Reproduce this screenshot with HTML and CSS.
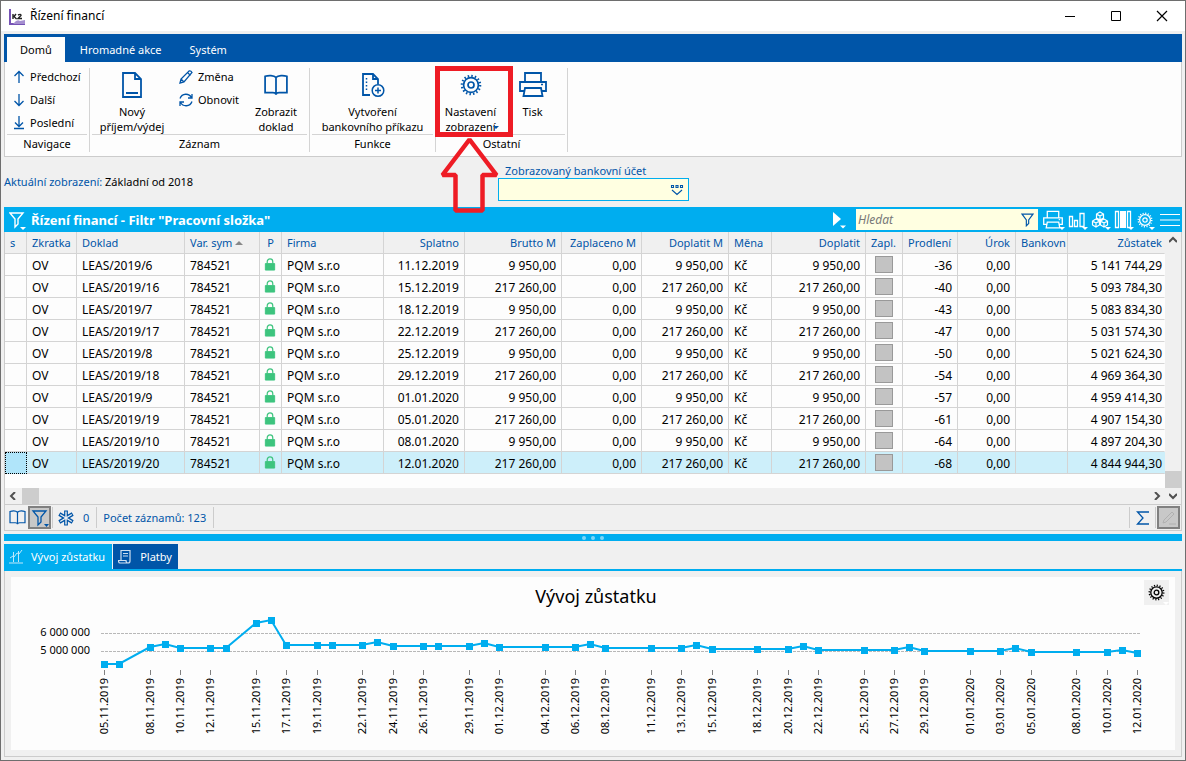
FILE: index.html
```html
<!DOCTYPE html>
<html lang="cs">
<head>
<meta charset="utf-8">
<title>Řízení financí</title>
<link rel="stylesheet" href="styles.css">
</head>
<body>
<svg class="defs" width="0" height="0" aria-hidden="true">
  <defs>
    <symbol id="gear" viewBox="0 0 22 22">
      <circle cx="11" cy="11" r="9.200" fill="none" stroke="currentColor" stroke-width="2.200" stroke-dasharray="1.500 2.113"/>
      <circle cx="11" cy="11" r="7.400" fill="none" stroke="currentColor" stroke-width="1.700"/>
      <circle cx="11" cy="11" r="3" fill="none" stroke="currentColor" stroke-width="1.700"/>
    </symbol>
    <symbol id="book" viewBox="0 0 22 20">
      <path d="M11 3v15M11 3C9 1 4 1 1 2v15h7c2 0 3 1 3 2 0-1 1-2 3-2h7V2c-3-1-8-1-10 1z" fill="none" stroke="currentColor" stroke-width="1.6"/>
    </symbol>
    <symbol id="funnel" viewBox="0 0 16 18">
      <path d="M1 1.500h14L9.500 9v4.500l-3 3V9z" fill="none" stroke="currentColor" stroke-width="1.5"/>
    </symbol>
    <symbol id="printer" viewBox="0 0 28 26">
      <path d="M6 9V1h16v8M6 19H1V10h26v9h-5M6 16h16l1.500 8h-19z" fill="none" stroke="currentColor" stroke-width="1.800"/>
      <path d="M22 12.500h2" stroke="currentColor" stroke-width="1.5"/>
    </symbol>
    <symbol id="lock" viewBox="0 0 12 14">
      <path d="M3 6V4a3 3 0 0 1 6 0v2" fill="none" stroke="#3dc47e" stroke-width="1.3"/>
      <path d="M1 6h10v7H1z" fill="#3dc47e" stroke="#3dc47e"/>
    </symbol>
  </defs>
</svg>
<div class="window">
  <header class="titlebar">
    <svg class="app-icon" width="17" height="17" viewBox="0 0 17 17"><path d="M1 1v15h15" fill="none" stroke="#7653b5" stroke-width="2"/><path d="M5 15q3-4 6-2l5-1v4H4z" fill="#a58fd0"/><path d="M4 6v5M7 6L5 8.500 7.500 11M9 7q3-1.500 3 .5L9 10.500h4" fill="none" stroke="#222" stroke-width="1.4"/></svg>
    <h1>Řízení financí</h1>
    <div class="window-buttons">
      <button aria-label="Minimalizovat"><svg width="12" height="12" viewBox="0 0 12 12"><path d="M1 6.500h10" stroke="#000"/></svg></button>
      <button aria-label="Maximalizovat"><svg width="12" height="12" viewBox="0 0 12 12"><path d="M1.500 1.500h9v9h-9z" fill="none" stroke="#000"/></svg></button>
      <button aria-label="Zavřít"><svg width="12" height="12" viewBox="0 0 12 12"><path d="M1 1l10 10M11 1L1 11" stroke="#000" stroke-width="1.2"/></svg></button>
    </div>
  </header>

  <main class="content">
    <section class="ribbon">
      <nav class="ribbon-tabs">
        <button class="active">Domů</button><button>Hromadné akce</button><button>Systém</button>
      </nav>
      <div class="ribbon-body">
        <div class="group group-nav">
          <div class="tools">
            <div class="small-tools">
              <button><svg width="12" height="14" viewBox="0 0 12 14"><path d="M6 13V2M1.500 6L6 1.500 10.500 6"/></svg>Předchozí</button>
              <button><svg width="12" height="14" viewBox="0 0 12 14"><path d="M6 1v11M1.500 8L6 12.500 10.500 8"/></svg>Další</button>
              <button><svg width="12" height="14" viewBox="0 0 12 14"><path d="M6 0v10M2 6.500L6 10.500l4-4M1 12.500h10"/></svg>Poslední</button>
            </div>
          </div>
          <h2>Navigace</h2>
        </div>
        <div class="group group-record">
          <div class="tools">
            <button class="big wide"><span class="icon"><svg width="22" height="28" viewBox="0 0 22 28"><path d="M2 2h12l6 6v18H2zM14 2v6h6M5 22h12" stroke-width="1.800"/></svg></span>Nový<br>příjem/výdej</button>
            <div class="small-tools">
              <button><svg width="14" height="14" viewBox="0 0 14 14"><path d="M1 13l1-4 8-8q2-.5 3 1.500L5 12zM8.500 2.500l3 3M2 9l3 3"/></svg>Změna</button>
              <button><svg width="14" height="14" viewBox="0 0 14 14"><path d="M1 5.500C3 0 10 0 12.500 4.500M13 1v4H9M13 8.500C11 14 4 14 1.500 9.500M1 13V9h4"/></svg>Obnovit</button>
            </div>
            <button class="big"><span class="icon"><svg width="24" height="22"><use href="#book"/></svg></span>Zobrazit<br>doklad</button>
          </div>
          <h2>Záznam</h2>
        </div>
        <div class="group group-function">
          <div class="tools">
            <button class="big"><span class="icon"><svg width="24" height="26" viewBox="0 0 24 26"><path d="M9 23H2V2h10l5 5v5M12 2v5h5" stroke-width="1.8"/><path d="M5.500 6v13" stroke-width="1.5" stroke-dasharray="1.500 2"/><circle cx="17" cy="18.500" r="5.800" stroke-width="1.500"/><path d="M17 15.500v6M14 18.500h6" stroke-width="1.500"/></svg></span>Vytvoření<br>bankovního příkazu</button>
          </div>
          <h2>Funkce</h2>
        </div>
        <div class="group group-other">
          <div class="tools">
            <button class="big"><span class="icon"><svg width="22" height="22"><use href="#gear"/></svg></span>Nastavení<br>zobrazení<svg class="callout" width="78" height="150" viewBox="0 0 78 150"><path d="M2.500 2.500h73v66h-73z" fill="none" stroke="#ee1c25" stroke-width="5"/><path d="M34.500 73.500L7.500 109h13v35.500h27V109h14z" fill="none" stroke="#ee1c25" stroke-width="4.500" stroke-linejoin="bevel"/><path d="M58 60h6l-3 3z" fill="#0055a8" stroke="none"/></svg></button>
            <button class="big"><span class="icon"><svg width="28" height="26"><use href="#printer"/></svg></span>Tisk</button>
          </div>
          <h2>Ostatní</h2>
        </div>
      </div>
    </section>

    <section class="view-bar">
      <p><span>Aktuální zobrazení:</span> Základní od 2018</p>
      <div class="account">
        <label for="account">Zobrazovaný bankovní účet</label>
        <div class="account-field"><input id="account" type="text"><svg width="14" height="12" viewBox="0 0 14 12"><path d="M1.500 1.500h2v2h-2zM6 1.500h2v2H6zM10.500 1.500h2v2h-2zM2 6l5 4.500L12 6" fill="none" stroke="#0055a8" stroke-width="1.100"/></svg></div>
      </div>
    </section>

    <section class="grid">
      <div class="grid-title">
        <button class="filter-button" aria-label="Filtr"><svg width="18" height="20" viewBox="0 0 18 20"><path d="M1 3h13L9 9v5l-3 3V9z" fill="none" stroke="#fff" stroke-width="1.400"/><path d="M11 17h6l-3 3z" fill="#fff"/></svg></button>
        <h2>Řízení financí - Filtr "Pracovní složka"</h2>
        <button class="play" aria-label="Spustit"><svg width="14" height="18" viewBox="0 0 14 18"><path d="M1 1l8 7-8 7z" fill="#fff"/><path d="M8 14.500h6l-3 3z" fill="#fff"/></svg></button>
        <div class="search"><input type="search" placeholder="Hledat" aria-label="Hledat"><svg width="13" height="14"><use href="#funnel"/></svg></div>
        <div class="grid-tools">
          <button class="drop" aria-label="Tisk"><svg width="20" height="20"><use href="#printer"/></svg></button>
          <button class="drop" aria-label="Graf"><svg width="18" height="20" viewBox="0 0 18 20"><path d="M1.500 6.500h3v10h-3zM6.500 10.500h3v6h-3zM12 3.500h4v13h-4z" fill="none" stroke="#fff" stroke-width="1.300"/></svg></button>
          <button class="drop" aria-label="Kostky"><svg width="18" height="20" viewBox="0 0 18 20"><path d="M9 2l3.500 2v4L9 10 5.500 8V4zM5.500 4L9 6l3.500-2M9 6v4M5 9l3.500 2v4L5 17l-3.500-2v-4zM1.500 11L5 13l3.500-2M5 13v4M13 9l3.500 2v4L13 17l-3.500-2v-4zM9.500 11l3.500 2 3.500-2M13 13v4" fill="none" stroke="#fff" stroke-width="1.200"/></svg></button>
          <button class="drop" aria-label="Sloupce"><svg width="18" height="20" viewBox="0 0 18 20"><path d="M1.500 1.500h3v16h-3zM13.500 1.500h3v16h-3z" fill="none" stroke="#fff" stroke-width="1.300"/><path d="M6 1h6v17H6z" fill="#fff"/></svg></button>
          <button class="drop" aria-label="Nastavení"><svg width="16" height="20"><use href="#gear"/></svg></button>
          <button class="menu" aria-label="Nabídka"><svg width="20" height="14" viewBox="0 0 20 14"><path d="M0 1.500h20M0 7h20M0 12.500h20" stroke="#fff" stroke-width="1.200"/></svg></button>
        </div>
      </div>
      <div class="grid-body">
        <div class="grid-main">
          <table>
            <colgroup><col class="w-s"><col class="w-zkr"><col class="w-dok"><col class="w-var"><col class="w-p"><col><col class="w-spl"><col class="w-bru"><col class="w-zap"><col class="w-dom"><col class="w-men"><col class="w-dop"><col class="w-chk"><col class="w-pro"><col class="w-uro"><col class="w-ban"><col class="w-zus"></colgroup>
            <thead><tr><th>s</th><th>Zkratka</th><th>Doklad</th><th>Var. sym <svg width="8" height="4" viewBox="0 0 8 4"><path d="M0 4l4-4 4 4z" fill="#888"/></svg></th><th class="mid">P</th><th>Firma</th><th class="num">Splatno</th><th class="num">Brutto M</th><th class="num">Zaplaceno M</th><th class="num">Doplatit M</th><th>Měna</th><th class="num">Doplatit</th><th>Zapl.</th><th>Prodlení</th><th class="num">Úrok</th><th>Bankovn</th><th class="num">Zůstatek</th></tr></thead>
            <tbody id="rows"></tbody>
          </table>
          <div class="hscroll">
            <button aria-label="Posunout vlevo"><svg width="8" height="8" viewBox="0 0 8 8"><path d="M6 0L2 4l4 4" fill="none" stroke="#505050" stroke-width="2"/></svg></button><span class="thumb"></span><button class="end" aria-label="Posunout vpravo"><svg width="8" height="8" viewBox="0 0 8 8"><path d="M2 0l4 4-4 4" fill="none" stroke="#505050" stroke-width="2"/></svg></button>
          </div>
        </div>
        <div class="vscroll">
          <button aria-label="Posunout nahoru"><svg width="8" height="8" viewBox="0 0 8 8"><path d="M0 6l4-4 4 4" fill="none" stroke="#505050" stroke-width="2"/></svg></button><span class="thumb"></span><button aria-label="Posunout dolů"><svg width="8" height="8" viewBox="0 0 8 8"><path d="M0 2l4 4 4-4" fill="none" stroke="#505050" stroke-width="2"/></svg></button>
        </div>
      </div>
      <div class="status">
        <button aria-label="Kniha"><svg width="17" height="15"><use href="#book"/></svg></button>
        <button class="pressed" aria-label="Filtr"><svg width="18" height="18" viewBox="0 0 18 18"><path d="M2 2h13l-5 6v5l-3 3V8z" fill="none" stroke="#0055a8" stroke-width="1.300"/><path d="M13 15h5l-2.500 3z" fill="#0055a8"/></svg></button>
        <span class="marks"><svg width="16" height="16" viewBox="0 0 16 16"><path d="M8 .5v15M1.300 4l13.400 8M14.700 4L1.300 12" stroke="#0055a8" stroke-width="3.800"/><path d="M8 1.500v13M2.200 4.500l11.600 7M13.800 4.500l-11.600 7" stroke="#f0f0f0" stroke-width="1.400"/></svg>0</span>
        <span class="count">Počet záznamů: 123</span>
        <button class="sum" aria-label="Součet"><svg width="14" height="14" viewBox="0 0 14 14"><path d="M13 1H1.500L7 7l-5.500 6H13" fill="none" stroke="#0055a8" stroke-width="1.300"/></svg></button>
        <button class="pressed" aria-label="Upravit" disabled><svg width="14" height="14" viewBox="0 0 14 14"><path d="M1 12l1-3 8-8 2 2-8 8zM7 13h7" fill="none" stroke="#b0b0b0"/></svg></button>
      </div>
    </section>

    <div class="splitter"><i></i><i></i><i></i></div>

    <section class="detail">
      <nav class="detail-tabs">
        <button class="active"><svg width="14" height="16" viewBox="0 0 14 16"><path d="M0 14h14M1 9l3-2 1 1 3-4 2 1 3-4M4.500 3v10M9.500 2v11" fill="none" stroke="#bfe8fa"/></svg>Vývoj zůstatku</button><button><svg width="14" height="16" viewBox="0 0 14 16"><path d="M3 11V1.500h9V12q0 2-2 2H2q-1.500 0-1.500-2.500H8q0 2.500 2 2.500M5 4.500h5M5 7h5" fill="none" stroke="#cfdff0" stroke-width="1.200"/></svg>Platby</button>
      </nav>
      <div class="detail-panel">
        <div class="chart">
          <svg id="chart" viewBox="0 0 1164 173" role="img" aria-label="Vývoj zůstatku"></svg>
          <button class="chart-settings drop" aria-label="Nastavení grafu"><svg width="17" height="17"><use href="#gear"/></svg></button>
        </div>
      </div>
    </section>
  </main>
</div>
<script src="app.js"></script>
</body>
</html>
```

FILE: styles.css
```css
* { box-sizing: border-box; }
body { margin: 0; font: 12px/16px "Noto Sans", "Open Sans", sans-serif; color: #000; }
h1, h2, p { margin: 0; font: inherit; }
button { margin: 0; padding: 0; border: 0; background: none; font: inherit; color: inherit; }
input { font: inherit; }
svg { display: block; flex: none; }
.defs { position: absolute; }

.window { display: flex; flex-direction: column; min-height: 100vh; border: 1px solid #6e6e6e; background: #f0f0f0; }
.titlebar { display: flex; align-items: center; height: 30px; padding: 0 0 0 8px; background: #fff; gap: 4px; }
.window-buttons { display: flex; margin-left: auto; }
.window-buttons button { display: grid; place-items: center; width: 46px; height: 28px; }
.content { display: flex; flex-direction: column; flex: 1; padding: 3px; }

.ribbon-tabs { display: flex; height: 28px; padding: 3px 3px 0; background: #0055a8; color: #fff; font-size: 11px; }
.ribbon-tabs button { padding: 0 13px 0 15px; }
.ribbon-tabs .active { padding: 0 13px; background: #fdfdfd; color: #000; }
.ribbon-body { display: flex; height: 95px; padding: 6px 0 4px; border: 1px solid #ccc; border-top: 0; background: #fdfdfd; font-size: 11px; }
.group { display: flex; flex-direction: column; padding: 0 2px; border-right: 1px solid #d4d4d4; }
.group-nav { width: 85px; }
.group-record { width: 220px; }
.group-function { width: 126px; }
.group-other { width: 132px; }
.group h2 { border-top: 1px solid #d4d4d4; line-height: 18px; text-align: center; }
.tools { display: flex; flex: none; justify-content: center; height: 66px; }
.small-tools { display: flex; flex-direction: column; flex: 1; margin-top: -3px; padding-left: 6px; }
.group-record .small-tools { padding-left: 7px; }
.small-tools button { display: flex; flex: none; align-items: center; gap: 5px; height: 23px; white-space: nowrap; }
.ribbon-body svg { fill: none; stroke: #0055a8; stroke-width: 1.3; color: #0055a8; }
.big { display: block; position: relative; align-self: flex-start; min-width: 62px; line-height: 15px; text-align: center; white-space: nowrap; }
.wide { width: 80px; }
.big .icon { display: grid; place-items: center; height: 34px; margin-bottom: 2px; }
.ribbon-body .callout { position: absolute; left: -5px; top: -2px; z-index: 2; pointer-events: none; }

.view-bar { display: flex; height: 50px; align-items: center; font-size: 11px; }
.view-bar p { width: 494px; }
.view-bar span, .view-bar label { color: #0055a8; }
.account { width: 191px; }
.account label { display: block; padding-left: 7px; line-height: 15px; }
.account-field { display: flex; align-items: center; height: 23px; padding-right: 4px; border: 1px solid #00adef; background: #ffffe1; }
.account-field input { flex: 1; min-width: 0; border: 0; background: none; outline: 0; }

.grid { border: 1px solid #ccc; border-top: 0; }
.grid-title { display: flex; align-items: center; height: 25px; margin: 0 -1px; padding: 0 2px 0 5px; background: #00adef; color: #fff; }
.grid-title h2 { padding-left: 4px; font-size: 13px; font-weight: 700; }
.play { margin-left: auto; margin-right: 10px; }
.search { display: flex; align-items: center; width: 182px; height: 21px; padding: 0 4px 0 2px; background: #ffffe1; color: #0055a8; }
.search input { flex: 1; min-width: 0; padding: 0; border: 0; background: none; outline: 0; font-style: italic; }
.search input::placeholder { color: #777; }
.grid-tools { display: flex; align-items: center; gap: 5px; padding-left: 5px; }
.menu { padding-left: 2px; }
.drop { position: relative; }
.drop::after { content: ""; position: absolute; right: 0; bottom: 0; border: 3px solid transparent; border-top-color: #fff; border-bottom: 0; }
.grid-tools .drop::after { right: -2px; }
.grid-body { display: flex; background: #fdfdfd; }
.grid-main { flex: 1; min-width: 0; }
table { width: 100%; table-layout: fixed; border-collapse: separate; border-spacing: 0; }
th, td { height: 22px; padding: 0 5px; border: solid #d4d4d4; border-width: 0 1px 1px 0; line-height: 16px; text-align: left; white-space: nowrap; overflow: hidden; font-weight: 400; }
th { background: #f0f0f0; color: #0055a8; font-size: 11px; }
td { padding-top: 2px; }
td:has(input), td:has(svg) { padding: 0 2px 0 1px; }
th svg { display: inline-block; vertical-align: 2px; }
th:last-child, td:last-child { border-right-color: transparent; padding-right: 2px; }
th:nth-child(16) { padding-right: 0; }
.num { text-align: right; }
.mid { text-align: center; }
td svg { margin: 0 auto; }
td input { display: block; appearance: none; width: 18px; height: 17px; margin: 0 auto; border: 1px solid #999; background: #c3c3c3; }
.selected td { background: #cdeffa; }
.selected td:first-child { background: #b0e5fa; border: 1px dotted #000; }
.w-s { width: 22px; } .w-zkr { width: 50px; } .w-dok { width: 108px; } .w-var { width: 75px; } .w-p { width: 22px; }
.w-spl { width: 81px; } .w-bru { width: 97px; } .w-zap { width: 80px; } .w-dom { width: 87px; } .w-men { width: 43px; }
.w-dop { width: 94px; } .w-chk { width: 37px; } .w-pro { width: 55px; } .w-uro { width: 58px; } .w-ban { width: 52px; } .w-zus { width: 97px; }
.hscroll { display: flex; height: 16px; margin-top: 14px; background: #f0f0f0; }
.hscroll button, .vscroll button { display: grid; place-items: center; width: 16px; height: 16px; }
.hscroll .end { margin-left: auto; }
.thumb { background: #cdcdcd; }
.hscroll .thumb { width: 17px; margin-left: 1px; }
.vscroll { display: flex; flex-direction: column; width: 16px; background: #f0f0f0; }
.vscroll .thumb { height: 17px; margin-top: auto; }
.status { display: flex; align-items: center; height: 26px; padding: 0 1px; border-top: 1px solid #ccc; color: #0055a8; font-size: 11px; }
.status button { display: grid; place-items: center; width: 22px; height: 23px; }
.status .pressed { width: 23px; border: 2px solid #808080; background: #c8c8c8; }
.marks { display: flex; align-items: center; height: 21px; margin-left: 1px; padding: 0 7px 0 5px; gap: 9px; border: solid #ccc; border-width: 0 1px; }
.count { height: 21px; padding: 3px 7px 0 6px; border-right: 1px solid #ccc; }
.status .sum { width: 27px; height: 21px; margin-left: auto; margin-right: 1px; border: solid #ccc; border-width: 0 1px; }

.splitter { display: flex; justify-content: center; align-items: center; gap: 5px; height: 7px; margin-top: 3px; background: #00adef; }
.splitter i { width: 4px; height: 4px; border-radius: 50%; background: #7fd6f7; }
.detail { display: flex; flex-direction: column; flex: 1; margin-top: 3px; }
.detail-tabs { display: flex; height: 27px; gap: 1px; border-bottom: 2px solid #00adef; color: #fff; font-size: 11px; }
.detail-tabs button { display: flex; align-items: center; gap: 8px; padding: 0 6px 0 5px; background: #0055a8; }
.detail-tabs .active { padding-right: 7px; background: #00adef; }
.detail-panel { display: flex; flex: 1; padding: 6px; border: 1px solid #ccc; border-top: 0; }
.chart { position: relative; flex: 1; background: #fdfdfd; }
#chart { width: 100%; }
.chart-settings { display: grid; place-items: center; position: absolute; top: 3px; right: 6px; width: 25px; height: 25px; background: #f0f0f0; }
.chart-title { font-size: 18px; text-anchor: middle; }
.axis { font-size: 11px; text-anchor: end; }
.gridline { stroke: #b8b8b8; stroke-dasharray: 3 1; }
.tick { stroke: #808080; }
.series { fill: none; stroke: #00adef; stroke-width: 2; }
.marker { fill: #00adef; }
```

FILE: app.js
```js
const rows = [
  ["6", "11.12.2019", 0, "-36", "5 141 744,29"],
  ["16", "15.12.2019", 1, "-40", "5 093 784,30"],
  ["7", "18.12.2019", 0, "-43", "5 083 834,30"],
  ["17", "22.12.2019", 1, "-47", "5 031 574,30"],
  ["8", "25.12.2019", 0, "-50", "5 021 624,30"],
  ["18", "29.12.2019", 1, "-54", "4 969 364,30"],
  ["9", "01.01.2020", 0, "-57", "4 959 414,30"],
  ["19", "05.01.2020", 1, "-61", "4 907 154,30"],
  ["10", "08.01.2020", 0, "-64", "4 897 204,30"],
  ["20", "12.01.2020", 1, "-68", "4 844 944,30"]
];
const amounts = ["9 950,00", "217 260,00"];
const lock = '<svg width="12" height="13"><use href="#lock"/></svg>';

document.getElementById("rows").innerHTML = rows.map(([doc, due, kind, delay, balance], i) => {
  const amount = amounts[kind];
  return `<tr${i === rows.length - 1 ? ' class="selected"' : ""}><td></td><td>OV</td><td>LEAS/2019/${doc}</td><td>784521</td><td>${lock}</td><td>PQM s.r.o</td>` +
    `<td class="num">${due}</td><td class="num">${amount}</td><td class="num">0,00</td><td class="num">${amount}</td><td>Kč</td><td class="num">${amount}</td>` +
    `<td><input type="checkbox" disabled aria-label="Zaplaceno LEAS/2019/${doc}"></td><td class="num">${delay}</td><td class="num">0,00</td><td></td><td class="num">${balance}</td></tr>`;
}).join("");

// Each point: days since 5 Nov 2019, vertical position in the chart, labelled on the axis.
const points = [
  [0,87,1],[1,87],[3,70,1],[4,67],[5,71,1],[7,71,1],[8,71],[10,46,1],[11,43],[12,68,1],[14,68,1],[15,68],
  [17,68,1],[18,65],[19,69,1],[21,69,1],[22,69],[24,69,1],[25,66],[26,70,1],[29,70,1],[31,70,1],[32,67],
  [33,71,1],[36,71,1],[38,71,1],[39,68],[40,72,1],[43,72,1],[45,72,1],[46,69],[47,73,1],[50,73,1],[52,73,1],
  [53,70],[54,74,1],[57,74,1],[59,74,1],[60,71],[61,75,1],[64,75,1],[66,75,1],[67,73],[68,76,1]
];
const px = day => Math.round(93 + day * 15.19);
const label = day => {
  const d = new Date(Date.UTC(2019, 10, 5 + day));
  return [String(d.getUTCDate()).padStart(2, "0"), String(d.getUTCMonth() + 1).padStart(2, "0"), d.getUTCFullYear()].join(".");
};
let out = '<text class="chart-title" x="585" y="26">Vývoj zůstatku</text>';
out += '<text class="axis" x="79" y="59">6 000 000</text><text class="axis" x="79" y="77">5 000 000</text>';
out += '<path class="gridline" d="M90 56.5h1039M90 74.5h1039"/>';
out += `<polyline class="series" points="${points.map(([d, y]) => px(d) + "," + y).join(" ")}"/>`;
for (const [d, y, labelled] of points) {
  const x = px(d);
  out += `<rect class="marker" x="${x - 3}" y="${y - 3}" width="7" height="7"/>`;
  if (labelled) {
    out += `<path class="tick" d="M${x + 0.5} 93v5"/><text class="axis" transform="translate(${x + 4} 101) rotate(-90)">${label(d)}</text>`;
  }
}
document.getElementById("chart").innerHTML = out;
```
